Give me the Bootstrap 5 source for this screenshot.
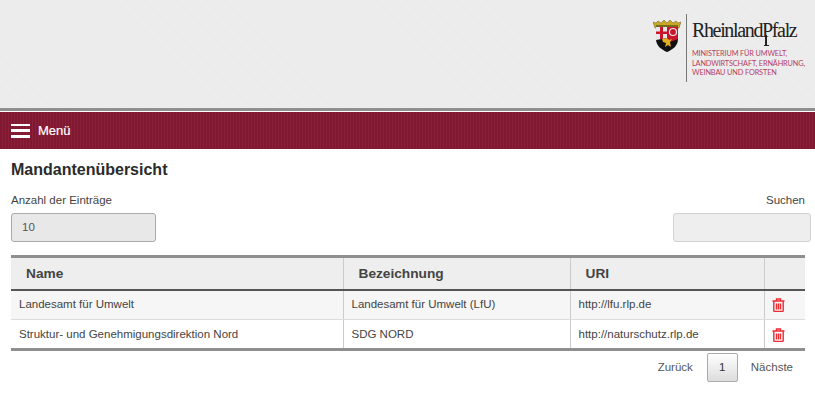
<!DOCTYPE html>
<html lang="de"><head><meta charset="utf-8"><title>Mandantenübersicht</title>
<link href="https://cdn.jsdelivr.net/npm/bootstrap@5.3.0/dist/css/bootstrap.min.css" rel="stylesheet">
<style>
html,body{height:412px;overflow:hidden}
body{font-family:"Liberation Sans",Arial,sans-serif;font-size:11.5px;color:#444;background:#fff}
.top-band{height:108px;background:repeating-linear-gradient(45deg,#ebebeb 0 1px,#ededed 1px 2px)}
.logo-box{padding:14px 10px 0 0}
.crest{width:28px;height:32px;margin:6px 0 0 0}
.logo-rule{width:1px;height:68px;background:#777;margin:0 5px 0 5px}
.logo-name{font-family:"Liberation Serif",serif;font-size:20px;line-height:24px;letter-spacing:-1.35px;color:#222;margin-top:4px;white-space:nowrap}
.long-p{position:relative}
.long-p::after{content:"";position:absolute;left:3px;top:16px;width:1.6px;height:10px;background:#222}
.long-p::before{content:"";position:absolute;left:1.500px;top:25.500px;width:5px;height:1px;background:#222}
.logo-min{font-family:Lato,sans-serif;font-size:7.3px;line-height:9.7px;color:#b5405f;margin-top:7px;white-space:nowrap;letter-spacing:-.12px}
.grey-rule{height:3px;background:#8f8f8f}
.menu-bar{height:38px;background:repeating-linear-gradient(90deg,#7f1830 0 2px,#8a2039 2px 3px);color:#fff;padding-left:11px;gap:8px;font-size:13px;-webkit-text-stroke:.2px #fff;border-top:1px solid #fff}
.burger{width:19px;height:14px;display:flex;flex-direction:column;justify-content:space-between}
.burger i{display:block;height:2.5px;background:#fff}
.page-area{padding:0 10px 0 11px}
.page-title{font-size:16px;font-weight:700;color:#2b2b2b;margin:12px 0 14px;line-height:18px}
.lbl{font-size:11.5px;line-height:14px;margin-bottom:6px;color:#444}
.fake-select{width:145px;height:29px;background:#e8e8e8;border:1px solid #aaa;border-radius:3px;padding:0 10px;line-height:27px;font-size:11.5px;color:#555}
.fake-search{display:block;width:138px;height:29px;background:#eee;border:1px solid #d2d2d2;border-radius:3px;margin-right:-6px}
.data-tbl{margin:13px 0 0;width:794px;table-layout:fixed;border-collapse:collapse;border-top:3px solid #8f8f8f;border-bottom:3px solid #8f8f8f;font-size:11.5px;color:#444}
.data-tbl th{background:#eee;font-size:13.7px;font-weight:700;color:#444;height:33px;padding:2px 15px 0;border-bottom:2px solid #555;border-right:1px solid #ccc;vertical-align:middle}
.data-tbl th:last-child,.data-tbl td:last-child{border-right:0}
.data-tbl td{height:30px;padding:2px 8px 0;border-right:1px solid #ccc;vertical-align:middle}
.data-tbl td:last-child{padding-left:7px}
.data-tbl tr.rw1 td{height:30px;padding-top:0;background:#f6f6f6;border-bottom:1px solid #ddd}
.pager{margin-top:2px;font-size:11.5px;color:#555;padding-right:12px}
.cur-page{width:31px;height:29px;border:1px solid #aaa;border-radius:2px;background:linear-gradient(#fff,#dcdcdc);text-align:center;line-height:27px;color:#333;margin:0 13px 0 14px}
.trash{display:block}
</style></head><body>
<header class="top-band d-flex justify-content-end">
<div class="logo-box d-flex">
<svg class="crest" viewBox="0 0 28 32" role="img" aria-label="Wappen">
<path d="M0 2l3 1 2-2 3 2 3-3 3 3 3-3 3 3 3-2 2 2 3-1-2 6H2z" fill="#c9a826" stroke="#6a5a18" stroke-width=".5"/>
<rect x="3" y="5" width="22" height="2" fill="#7a6a20"/>
<path d="M3 7h22v12c0 7-6 11-11 13C9 30 3 26 3 19z" fill="#111"/>
<path d="M3 7h11v11L3 20z" fill="#e8e8e8"/><path d="M7 7h3v12H7zM3 11.500h11v2.500H3z" fill="#c9152b"/>
<path d="M14 7h11v12l-8 3-3-4z" fill="#c9152b"/><circle cx="20" cy="12" r="3.500" fill="none" stroke="#eee" stroke-width="1.200"/>
<path d="M9 19l5-1 2 2 3-1-2 3 1 5-3-2-3 2 1-4-3-1z" fill="#e0b020"/>
</svg>
<div class="logo-rule"></div>
<div>
<div class="logo-name">Rheinland<span class="long-p">P</span>falz</div>
<div class="logo-min">MINISTERIUM FÜR UMWELT,<br>LANDWIRTSCHAFT, ERNÄHRUNG,<br>WEINBAU UND FORSTEN</div>
</div>
</div>
</header>
<div class="grey-rule"></div>
<nav class="menu-bar d-flex align-items-center">
<span class="burger"><i></i><i></i><i></i></span><span>Menü</span>
</nav>
<main class="page-area">
<h1 class="page-title">Mandantenübersicht</h1>
<div class="d-flex justify-content-between">
<div><div class="lbl">Anzahl der Einträge</div><div class="fake-select">10</div></div>
<div class="text-end"><label class="lbl d-block" for="q">Suchen</label><input id="q" class="fake-search" type="text"></div>
</div>
<table class="data-tbl">
<colgroup><col style="width:332px"><col style="width:227px"><col style="width:194px"><col></colgroup>
<thead><tr><th>Name</th><th>Bezeichnung</th><th>URI</th><th></th></tr></thead>
<tbody>
<tr class="rw1"><td>Landesamt für Umwelt</td><td>Landesamt für Umwelt (LfU)</td><td>http://lfu.rlp.de</td><td><svg class="trash" width="13" height="14" viewBox="0 0 13 14" fill="none" stroke="#ee2a33" stroke-width="1.4"><path d="M.5 3h12M4.500 3V1h4v2M1.800 3v9.500c0 .6.500 1 1 1h7.400c.5 0 1-.4 1-1V3M4.500 5.500v6M6.500 5.500v6M8.500 5.500v6"/></svg></td></tr>
<tr><td>Struktur- und Genehmigungsdirektion Nord</td><td>SDG NORD</td><td>http://naturschutz.rlp.de</td><td><svg class="trash" width="13" height="14" viewBox="0 0 13 14" fill="none" stroke="#ee2a33" stroke-width="1.4"><path d="M.5 3h12M4.500 3V1h4v2M1.800 3v9.500c0 .6.500 1 1 1h7.400c.5 0 1-.4 1-1V3M4.500 5.500v6M6.500 5.500v6M8.500 5.500v6"/></svg></td></tr>
</tbody></table>
<div class="pager d-flex justify-content-end align-items-center"><span>Zurück</span><span class="cur-page">1</span><span>Nächste</span></div>
</main>
<script src="https://cdn.jsdelivr.net/npm/bootstrap@5.3.0/dist/js/bootstrap.bundle.min.js"></script>
</body></html>
